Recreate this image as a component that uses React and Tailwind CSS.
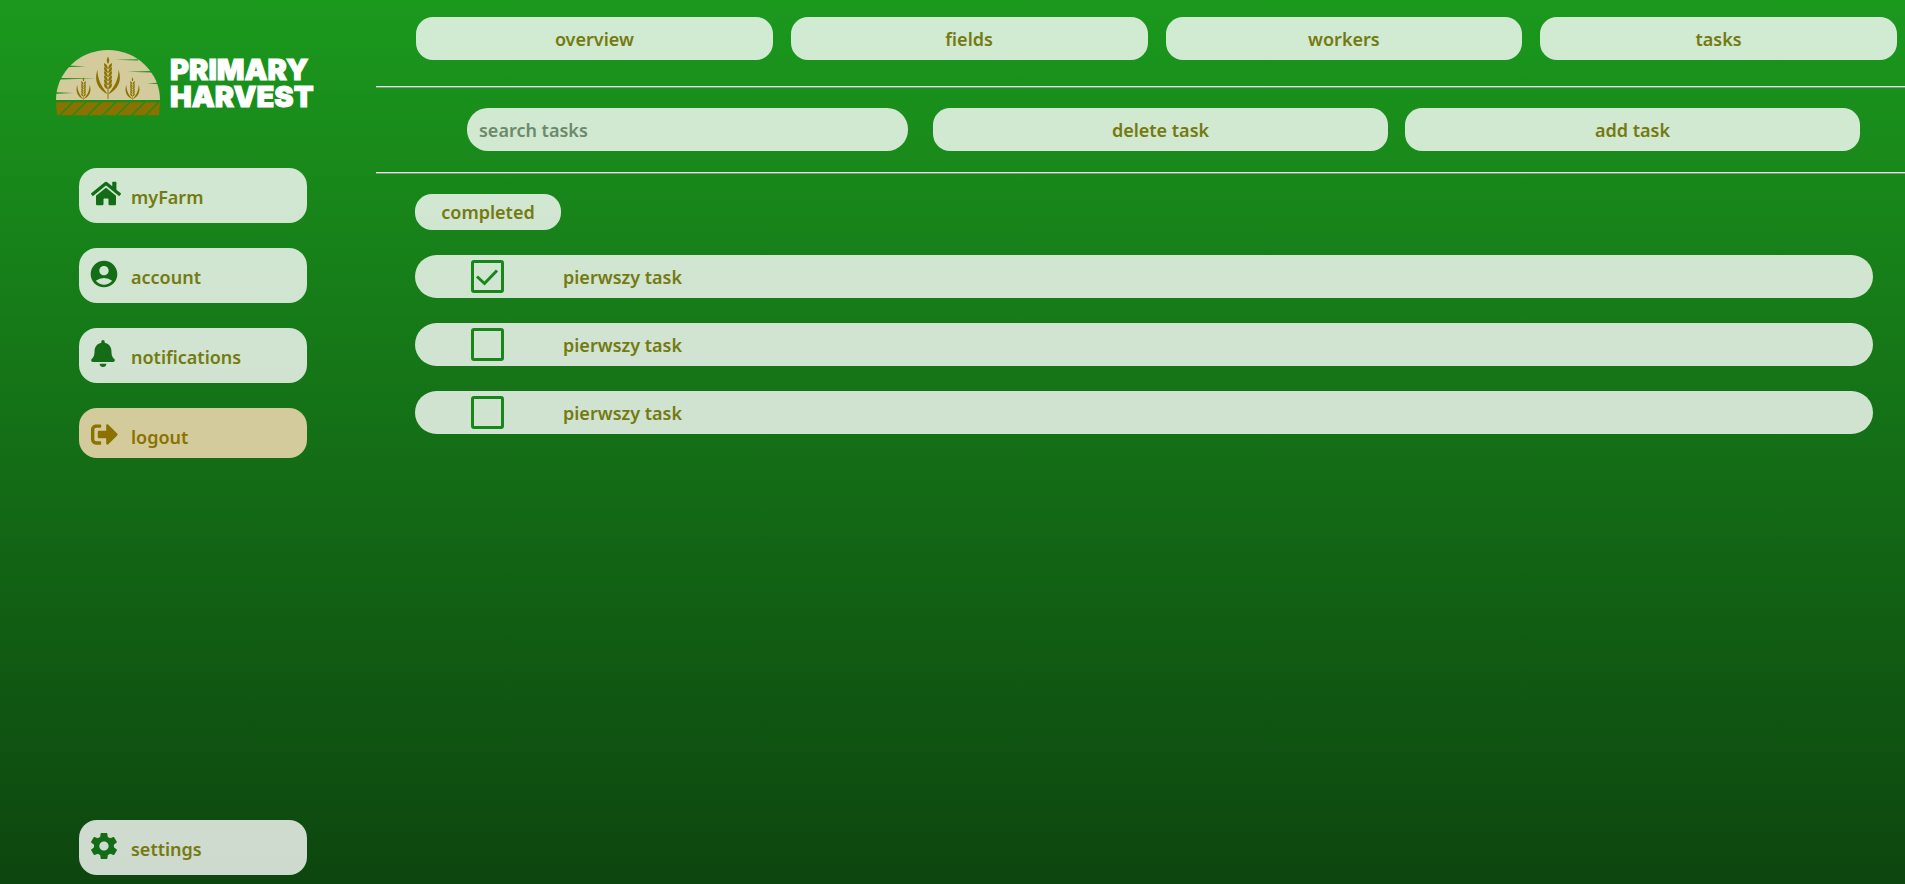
import { FaHome, FaBell, FaSignOutAlt } from "react-icons/fa";
import { MdAccountCircle } from "react-icons/md";
import { IoMdSettings } from "react-icons/io";

const navItems = ["overview", "fields", "workers", "tasks"];

const tasks = [
  { id: 1, name: "pierwszy task", done: true },
  { id: 2, name: "pierwszy task", done: false },
  { id: 3, name: "pierwszy task", done: false },
];

function Ear({ x, y, scale }) {
  const rows = [0, 1, 2, 3, 4, 5];
  return (
    <g transform={`translate(${x} ${y}) scale(${scale})`} fill="#8a7100">
      <path d="M0 -7 C1.8 -3.5 1.8 -1.5 0 1 C-1.8 -1.5 -1.8 -3.5 0 -7Z" />
      {rows.map((i) => (
        <g key={i} transform={`translate(0 ${i * 4.4})`}>
          <path d="M-0.3 5 C-1 2 -2.4 1 -4.2 0 C-4.8 3 -3.4 5.4 -0.3 6.6Z" />
          <path d="M0.3 5 C1 2 2.4 1 4.2 0 C4.8 3 3.4 5.4 0.3 6.6Z" />
        </g>
      ))}
      <path d="M-11.5 7 C-15.5 20 -11 28 -0.5 34 C-2.5 29 -11 24 -11.5 7Z" />
      <path d="M11.5 7 C15.5 20 11 28 0.5 34 C2.5 29 11 24 11.5 7Z" />
      <rect x="-0.5" y="28" width="1" height="11" />
    </g>
  );
}

function LogoMark() {
  return (
    <svg viewBox="0 0 104 66" className="h-[66px] w-[104px] shrink-0" aria-hidden="true">
      <path d="M0 50 A52 50 0 0 1 104 50Z" fill="#d4cb9c" />
      <g fill="#1b8f1c">
        <path d="M59 9.8 L82 9.2 V10.6Z" />
        <path d="M71 21.7 L96 21 V22.6Z" />
        <path d="M91 33.3 L102 32.8 V34Z" />
        <path d="M10 15.4 L30 16.2 L10 17.2Z" />
        <path d="M3 28 L40 28.6 L3 29.4Z" />
        <path d="M0 42.2 L18 43 L0 43.8Z" />
      </g>
      <Ear x={52} y={13} scale={0.92} />
      <Ear x={27.5} y={31} scale={0.54} />
      <Ear x={76.5} y={31} scale={0.54} />
      <path d="M0 52.3 H104 L103 65.3 H1Z" fill="#8a7100" />
      <g stroke="#1b8f1c" strokeWidth="1.4">
        <path d="M3 66 L17 52M16 66 L30 52M31 66 L45 52M46 66 L60 52M60 66 L74 52M75 66 L89 52M89 66 L103 52" />
      </g>
    </svg>
  );
}

function SideButton({ icon: Icon, iconClass, label, tone }) {
  const look =
    tone === "sand"
      ? "h-[50px] pt-[8px] bg-[#d4cb9c] text-[#8a7100]"
      : "h-[55px] pt-[2px] bg-white/80 text-[#747a10]";
  return (
    <button className={`flex w-full items-center rounded-[18px] pl-3 text-lg font-semibold ${look}`}>
      <span className={`w-10 ${tone === "sand" ? "" : "text-[#146c16]"}`}>
        <Icon className={`-mt-[6px] ${iconClass}`} />
      </span>
      <span>{label}</span>
    </button>
  );
}

function Rule() {
  return <hr className="h-[2px] border-t border-b border-t-[#d9e6d9] border-b-[#7f9a7f]" />;
}

const pill = "h-[43px] rounded-[17px] bg-white/80 text-lg font-semibold text-[#747a10]";

export default function App() {
  return (
    <div className="flex min-h-screen bg-linear-to-b from-[#1b991d] via-[#146f16] to-[#0d460f] font-['Noto_Sans',sans-serif]">
      <aside className="flex w-[376px] shrink-0 flex-col pb-[9px]">
        <div className="flex items-center gap-[10px] pt-[50px] pl-14">
          <LogoMark />
          <div className="font-['Inter',sans-serif] text-[29px] leading-[27px] font-black text-white [-webkit-text-stroke:1px_white]">
            PRIMARY
            <br />
            HARVEST
          </div>
        </div>
        <nav className="mt-[52px] flex grow flex-col gap-[25px] pr-[69px] pl-[79px]">
          <SideButton icon={FaHome} iconClass="h-[27px] w-[30px]" label="myFarm" />
          <SideButton icon={MdAccountCircle} iconClass="size-8 -ml-[3px]" label="account" />
          <SideButton icon={FaBell} iconClass="h-[27px] w-6" label="notifications" />
          <SideButton icon={FaSignOutAlt} iconClass="size-[27px]" label="logout" tone="sand" />
          <div className="mt-auto">
            <SideButton icon={IoMdSettings} iconClass="size-8 -ml-[3px]" label="settings" />
          </div>
        </nav>
      </aside>
      <main className="min-w-0 grow">
        <nav className="grid grid-cols-4 gap-[18px] pt-[17px] pr-2 pb-[26px] pl-10">
          {navItems.map((n) => (
            <button key={n} className={pill}>{n}</button>
          ))}
        </nav>
        <Rule />
        <div className="grid grid-cols-[449fr_455fr_455fr] gap-[17px] pt-5 pr-[45px] pb-[21px] pl-[91px]">
          <div className="min-w-0 pr-2">
            <input
              type="search"
              aria-label="search tasks"
              placeholder="search tasks"
              className="block h-[43px] w-full rounded-[21px] bg-white/80 px-3 text-lg font-semibold text-[#747a10] placeholder:text-[#6b8a6c]"
            />
          </div>
          <button className={pill}>delete task</button>
          <button className={pill}>add task</button>
        </div>
        <Rule />
        <section className="pt-5 pr-8 pl-[39px]">
          <button className="h-9 w-[146px] rounded-[17px] bg-white/80 text-lg font-semibold text-[#747a10]">
            completed
          </button>
          <ul className="mt-[25px] flex flex-col gap-[25px]">
            {tasks.map((t) => (
              <li key={t.id}>
                <label className="flex h-[43px] items-center rounded-full bg-white/80 pl-14 text-lg font-semibold text-[#747a10]">
                  <span className="relative mr-[59px] size-[33px]">
                    <input
                      type="checkbox"
                      defaultChecked={t.done}
                      className="peer block size-[33px] appearance-none rounded-[3px] border-3 border-[#17871a]"
                    />
                    <svg
                      viewBox="0 0 33 33"
                      className="pointer-events-none absolute inset-0 hidden peer-checked:block"
                      fill="none"
                      stroke="#17871a"
                      strokeWidth="3"
                      aria-hidden="true"
                    >
                      <path d="M6 16.5 L13.5 23.5 L26 10.5" />
                    </svg>
                  </span>
                  {t.name}
                </label>
              </li>
            ))}
          </ul>
        </section>
      </main>
    </div>
  );
}
